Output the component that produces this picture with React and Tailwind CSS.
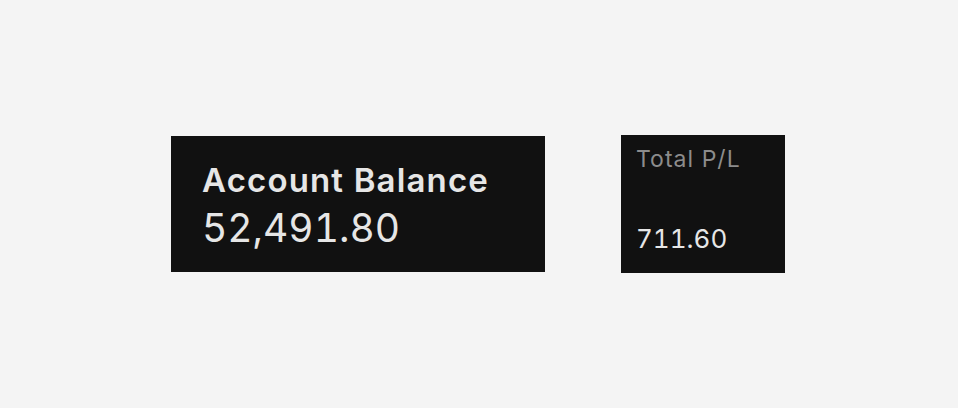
import React from "react";

export default function App() {
  return (
    <div
      className="w-[958px] h-[408px] bg-[#f4f4f4] flex items-center pl-[171px] gap-[76px]"
      style={{ fontFamily: "Inter, 'Noto Sans', sans-serif" }}
    >
      <div className="w-[374px] h-[136px] shrink-0 bg-[#111111] pt-[24px] pl-[31px]">
        <div className="text-[33px] leading-[40px] font-semibold tracking-[0.035em] text-[#e6e6e6]">
          Account Balance
        </div>
        <div className="text-[39px] leading-[56px] tabular-nums text-[#e6e6e6]">
          52,491.80
        </div>
      </div>
      <div className="w-[164px] h-[138px] shrink-0 bg-[#111111] pt-[8px] pl-[15px]">
        <div className="text-[23px] leading-[32px] tracking-[0.045em] text-[#8c8c8c]">Total P/L</div>
        <div className="mt-[48px] text-[26px] leading-[32px] tabular-nums text-[#e6e6e6]">
          711.60
        </div>
      </div>
    </div>
  );
}
